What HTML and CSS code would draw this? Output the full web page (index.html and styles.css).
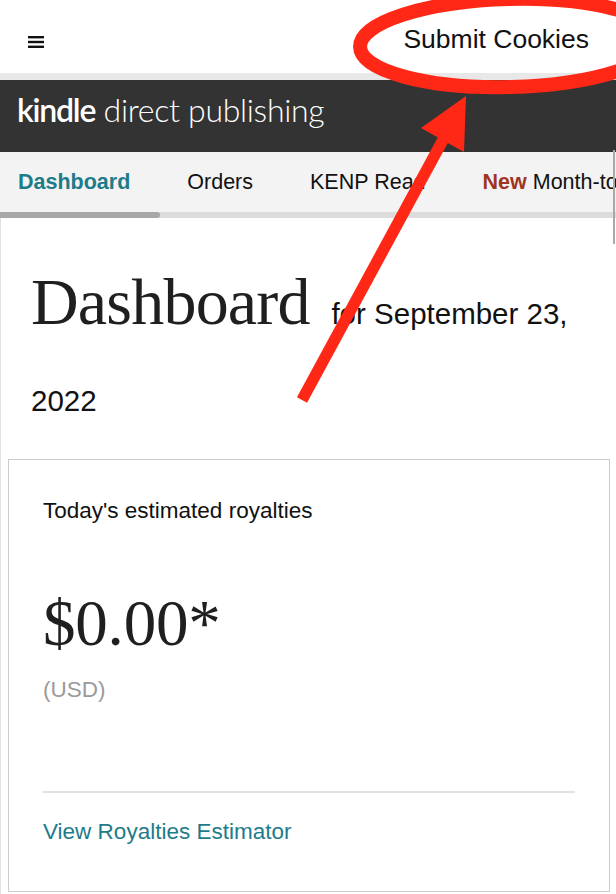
FILE: index.html
```html
<!DOCTYPE html>
<html lang="en">
<head>
<meta charset="utf-8">
<title>KDP Dashboard</title>
<link rel="stylesheet" href="styles.css">
</head>
<body>
<div class="page">
  <header class="topbar">
    <svg class="burger" width="16" height="12" viewBox="0 0 16 12"><rect x="0" y="0" width="16" height="2.4" fill="#111"/><rect x="0" y="4.8" width="16" height="2.4" fill="#111"/><rect x="0" y="9.6" width="16" height="2.4" fill="#111"/></svg>
    <span class="submit">Submit Cookies</span>
  </header>
  <div class="stripe"></div>
  <div class="brand"><span class="brand-k">kindle</span><span class="brand-d"> direct publishing</span></div>
  <nav class="tabs">
    <div class="tab-row">
      <span class="tab active">Dashboard</span>
      <span class="tab">Orders</span>
      <span class="tab">KENP Read</span>
      <span class="tab"><b class="new">New</b> Month-to-date</span>
    </div>
    <div class="track"><div class="thumb"></div></div>
  </nav>
  <main class="main">
    <h1 class="title">Dashboard <span class="date">for September 23, 2022</span></h1>
    <section class="card">
      <div class="card-title">Today's estimated royalties</div>
      <div class="amount">$0.00*</div>
      <div class="currency">(USD)</div>
      <div class="divider"></div>
      <a class="link">View Royalties Estimator</a>
    </section>
  </main>
  <div class="vscroll"></div>
  <svg class="annot" width="616" height="894" viewBox="0 0 616 894">
    <ellipse cx="510" cy="43" rx="150" ry="44" transform="rotate(-1.5 510 43)" fill="none" stroke="#ff2816" stroke-width="14"/>
    <line x1="302" y1="400" x2="444" y2="138" stroke="#ff2816" stroke-width="11.5"/>
    <polygon points="466,96 421,128 464,152" fill="#ff2816"/>
  </svg>
</div>
</body>
</html>
```
FILE: styles.css
```css
* { box-sizing: border-box; }
html, body { margin: 0; padding: 0; background: #fff; }
body { font-family: "Liberation Sans", Arial, sans-serif; color: #111; }
.page { position: relative; width: 616px; height: 894px; overflow: hidden; }

.topbar { height: 73px; display: flex; justify-content: space-between; align-items: flex-start; padding: 0 27px 0 28px; background: #fff; }
.burger { margin-top: 36px; display: block; }
.submit { margin-top: 24px; font-size: 26.5px; line-height: 30px; color: #111; }

.stripe { height: 7px; background: #e8e8e8; }

.brand { height: 72px; background: #333333; padding: 10px 0 0 17px; color: #fff; font-family: Lato, "Liberation Sans", sans-serif; font-size: 32px; line-height: 40px; white-space: nowrap; letter-spacing: -0.3px; }
.brand-k { font-weight: 600; letter-spacing: -1.2px; }
.brand-d { font-weight: 300; }

.tabs { background: #f3f3f3; }
.tab-row { height: 60px; display: flex; gap: 57px; padding-left: 18px; white-space: nowrap; overflow: hidden; font-size: 21.5px; line-height: 60px; color: #111; }
.tab.active { color: #1e7b8a; font-weight: bold; }
.new { color: #a0351f; }
.track { height: 6px; background: #dcdcdc; }
.thumb { width: 160px; height: 6px; background: #a8a8a8; border-radius: 0 3px 3px 0; }

.main { border-left: 1px solid #e2e2e2; padding-bottom: 20px; }
.title { margin: 0; padding: 40px 20px 0 30px; font-family: "Liberation Serif", "Times New Roman", serif; font-weight: normal; font-size: 66px; line-height: 87px; letter-spacing: -0.8px; color: #1f1f1f; }
.date { margin-left: 6px; font-family: "Liberation Sans", Arial, sans-serif; font-size: 29.5px; line-height: 1; letter-spacing: 0; color: #111; }

.card { margin: 27px 6px 0 7px; border: 1px solid #cccccc; padding: 36px 34px 44px 34px; }
.card-title { font-size: 22.5px; line-height: 30px; color: #111; }
.amount { margin-top: 57px; font-family: "Liberation Serif", "Times New Roman", serif; font-size: 65px; line-height: 80px; letter-spacing: -0.2px; color: #1f1f1f; }
.currency { margin-top: 12px; font-size: 22.5px; line-height: 30px; color: #9a9a9a; }
.divider { margin-top: 86px; height: 2px; background: #e2e2e2; }
.link { display: block; margin-top: 24px; font-size: 22.5px; line-height: 30px; color: #1e7b8a; text-decoration: none; }

.vscroll { position: absolute; left: 613px; top: 150px; width: 2px; height: 94px; background: #a9a9a9; }
.annot { position: absolute; left: 0; top: 0; pointer-events: none; }
```
